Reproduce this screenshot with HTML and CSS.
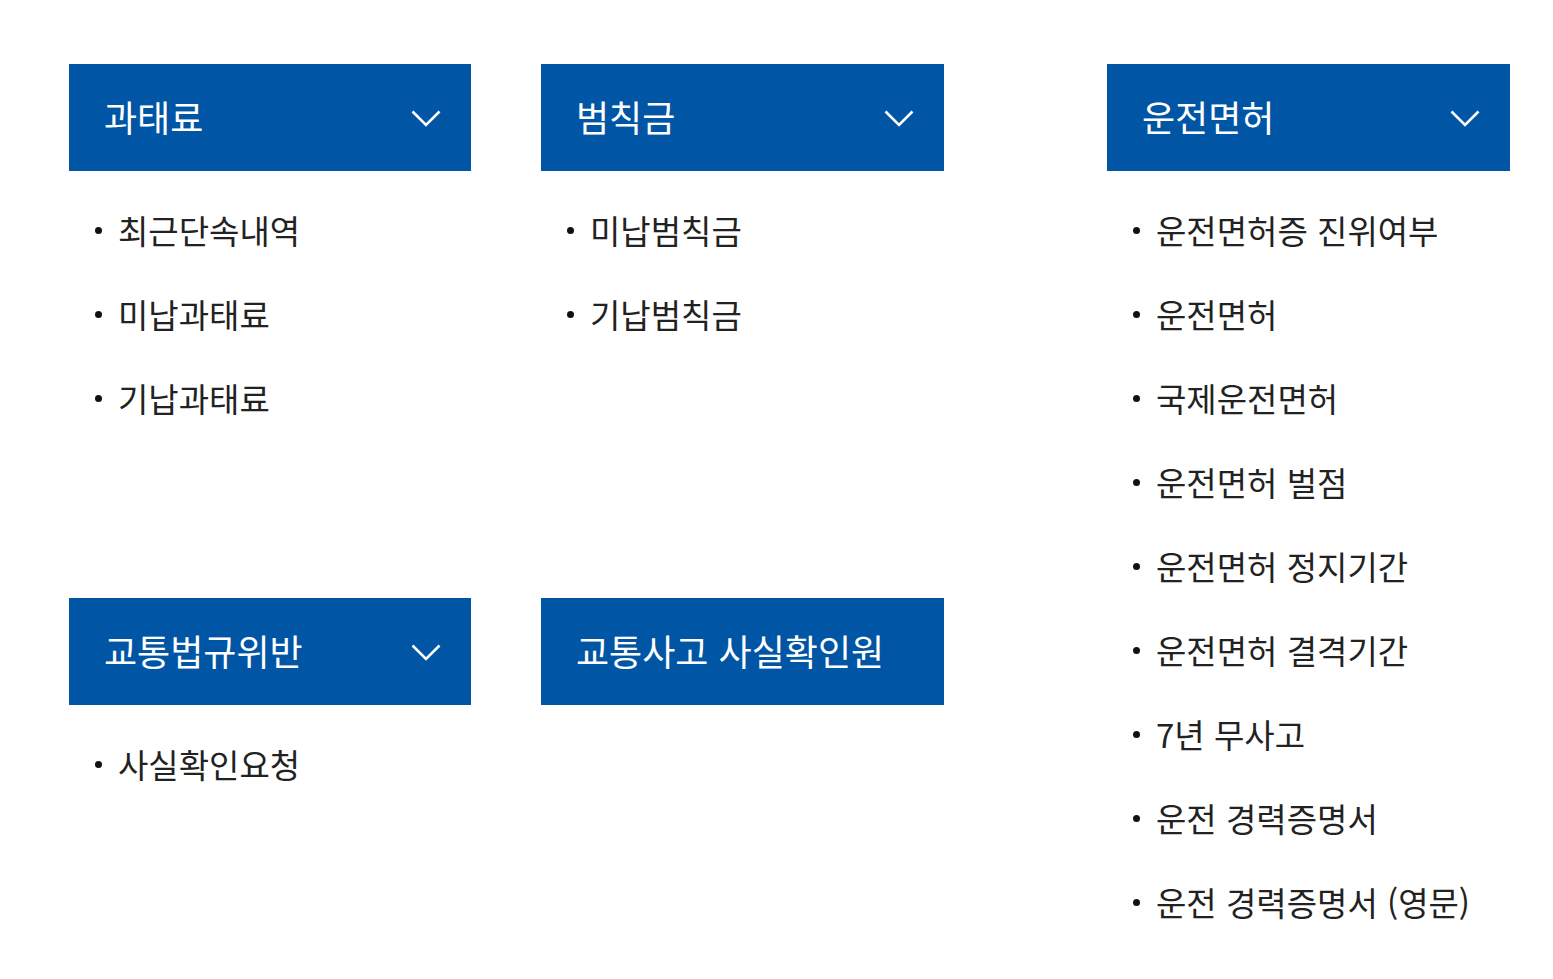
FILE: index.html
```html
<!DOCTYPE html>
<html lang="ko">
<head>
  <meta charset="UTF-8">
  <title>민원 메뉴</title>
  <link rel="stylesheet" href="styles.css">
</head>
<body>
  <div class="menu">
    <div class="left">
      <div class="group">
        <div class="group-head"><span>과태료</span><span class="chevron"><svg width="30" height="18" viewBox="0 0 30 18"><path d="M1.5 1.5 L15 15 L28.5 1.5" fill="none" stroke="#fff" stroke-width="2.6"/></svg></span></div>
        <ul class="items">
          <li>최근단속내역</li>
          <li>미납과태료</li>
          <li>기납과태료</li>
        </ul>
      </div>
      <div class="group">
        <div class="group-head"><span>범칙금</span><span class="chevron"><svg width="30" height="18" viewBox="0 0 30 18"><path d="M1.5 1.5 L15 15 L28.5 1.5" fill="none" stroke="#fff" stroke-width="2.6"/></svg></span></div>
        <ul class="items">
          <li>미납범칙금</li>
          <li>기납범칙금</li>
        </ul>
      </div>
      <div class="group">
        <div class="group-head"><span>교통법규위반</span><span class="chevron"><svg width="30" height="18" viewBox="0 0 30 18"><path d="M1.5 1.5 L15 15 L28.5 1.5" fill="none" stroke="#fff" stroke-width="2.6"/></svg></span></div>
        <ul class="items">
          <li>사실확인요청</li>
        </ul>
      </div>
      <div class="group">
        <div class="group-head"><span>교통사고 사실확인원</span></div>
      </div>
    </div>
    <div class="right">
      <div class="group">
        <div class="group-head"><span>운전면허</span><span class="chevron"><svg width="30" height="18" viewBox="0 0 30 18"><path d="M1.5 1.5 L15 15 L28.5 1.5" fill="none" stroke="#fff" stroke-width="2.6"/></svg></span></div>
        <ul class="items">
          <li>운전면허증 진위여부</li>
          <li>운전면허</li>
          <li>국제운전면허</li>
          <li>운전면허 벌점</li>
          <li>운전면허 정지기간</li>
          <li>운전면허 결격기간</li>
          <li>7년 무사고</li>
          <li>운전 경력증명서</li>
          <li>운전 경력증명서 (영문)</li>
        </ul>
      </div>
    </div>
  </div>
</body>
</html>
```

FILE: styles.css
```css
body { margin: 0; background: #fff; font-family: "Noto Sans CJK KR", "Noto Sans", sans-serif; color: #222; }
.menu { display: flex; padding: 64px 0 0 69px; }
.left { display: grid; grid-template-columns: 402px 403px; grid-template-rows: 534px auto; column-gap: 70px; }
.right { width: 403px; margin-left: 163px; }
.group-head { display: flex; align-items: center; justify-content: space-between; height: 107px; padding: 0 30px 0 35px; background: #0055a5; color: #fff; font-size: 36px; box-sizing: border-box; }
.group-head span:first-child { margin-bottom: 4px; }
.chevron { display: flex; margin-top: 2px; }
.items { list-style: none; margin: 0; padding: 17px 0 0 0; }
.items li { display: flex; align-items: center; height: 84px; padding-left: 26px; font-size: 33px; }
.items li::before { content: ""; width: 7px; height: 7px; border-radius: 50%; background: #111; margin-right: 16px; margin-top: 1px; }
```
